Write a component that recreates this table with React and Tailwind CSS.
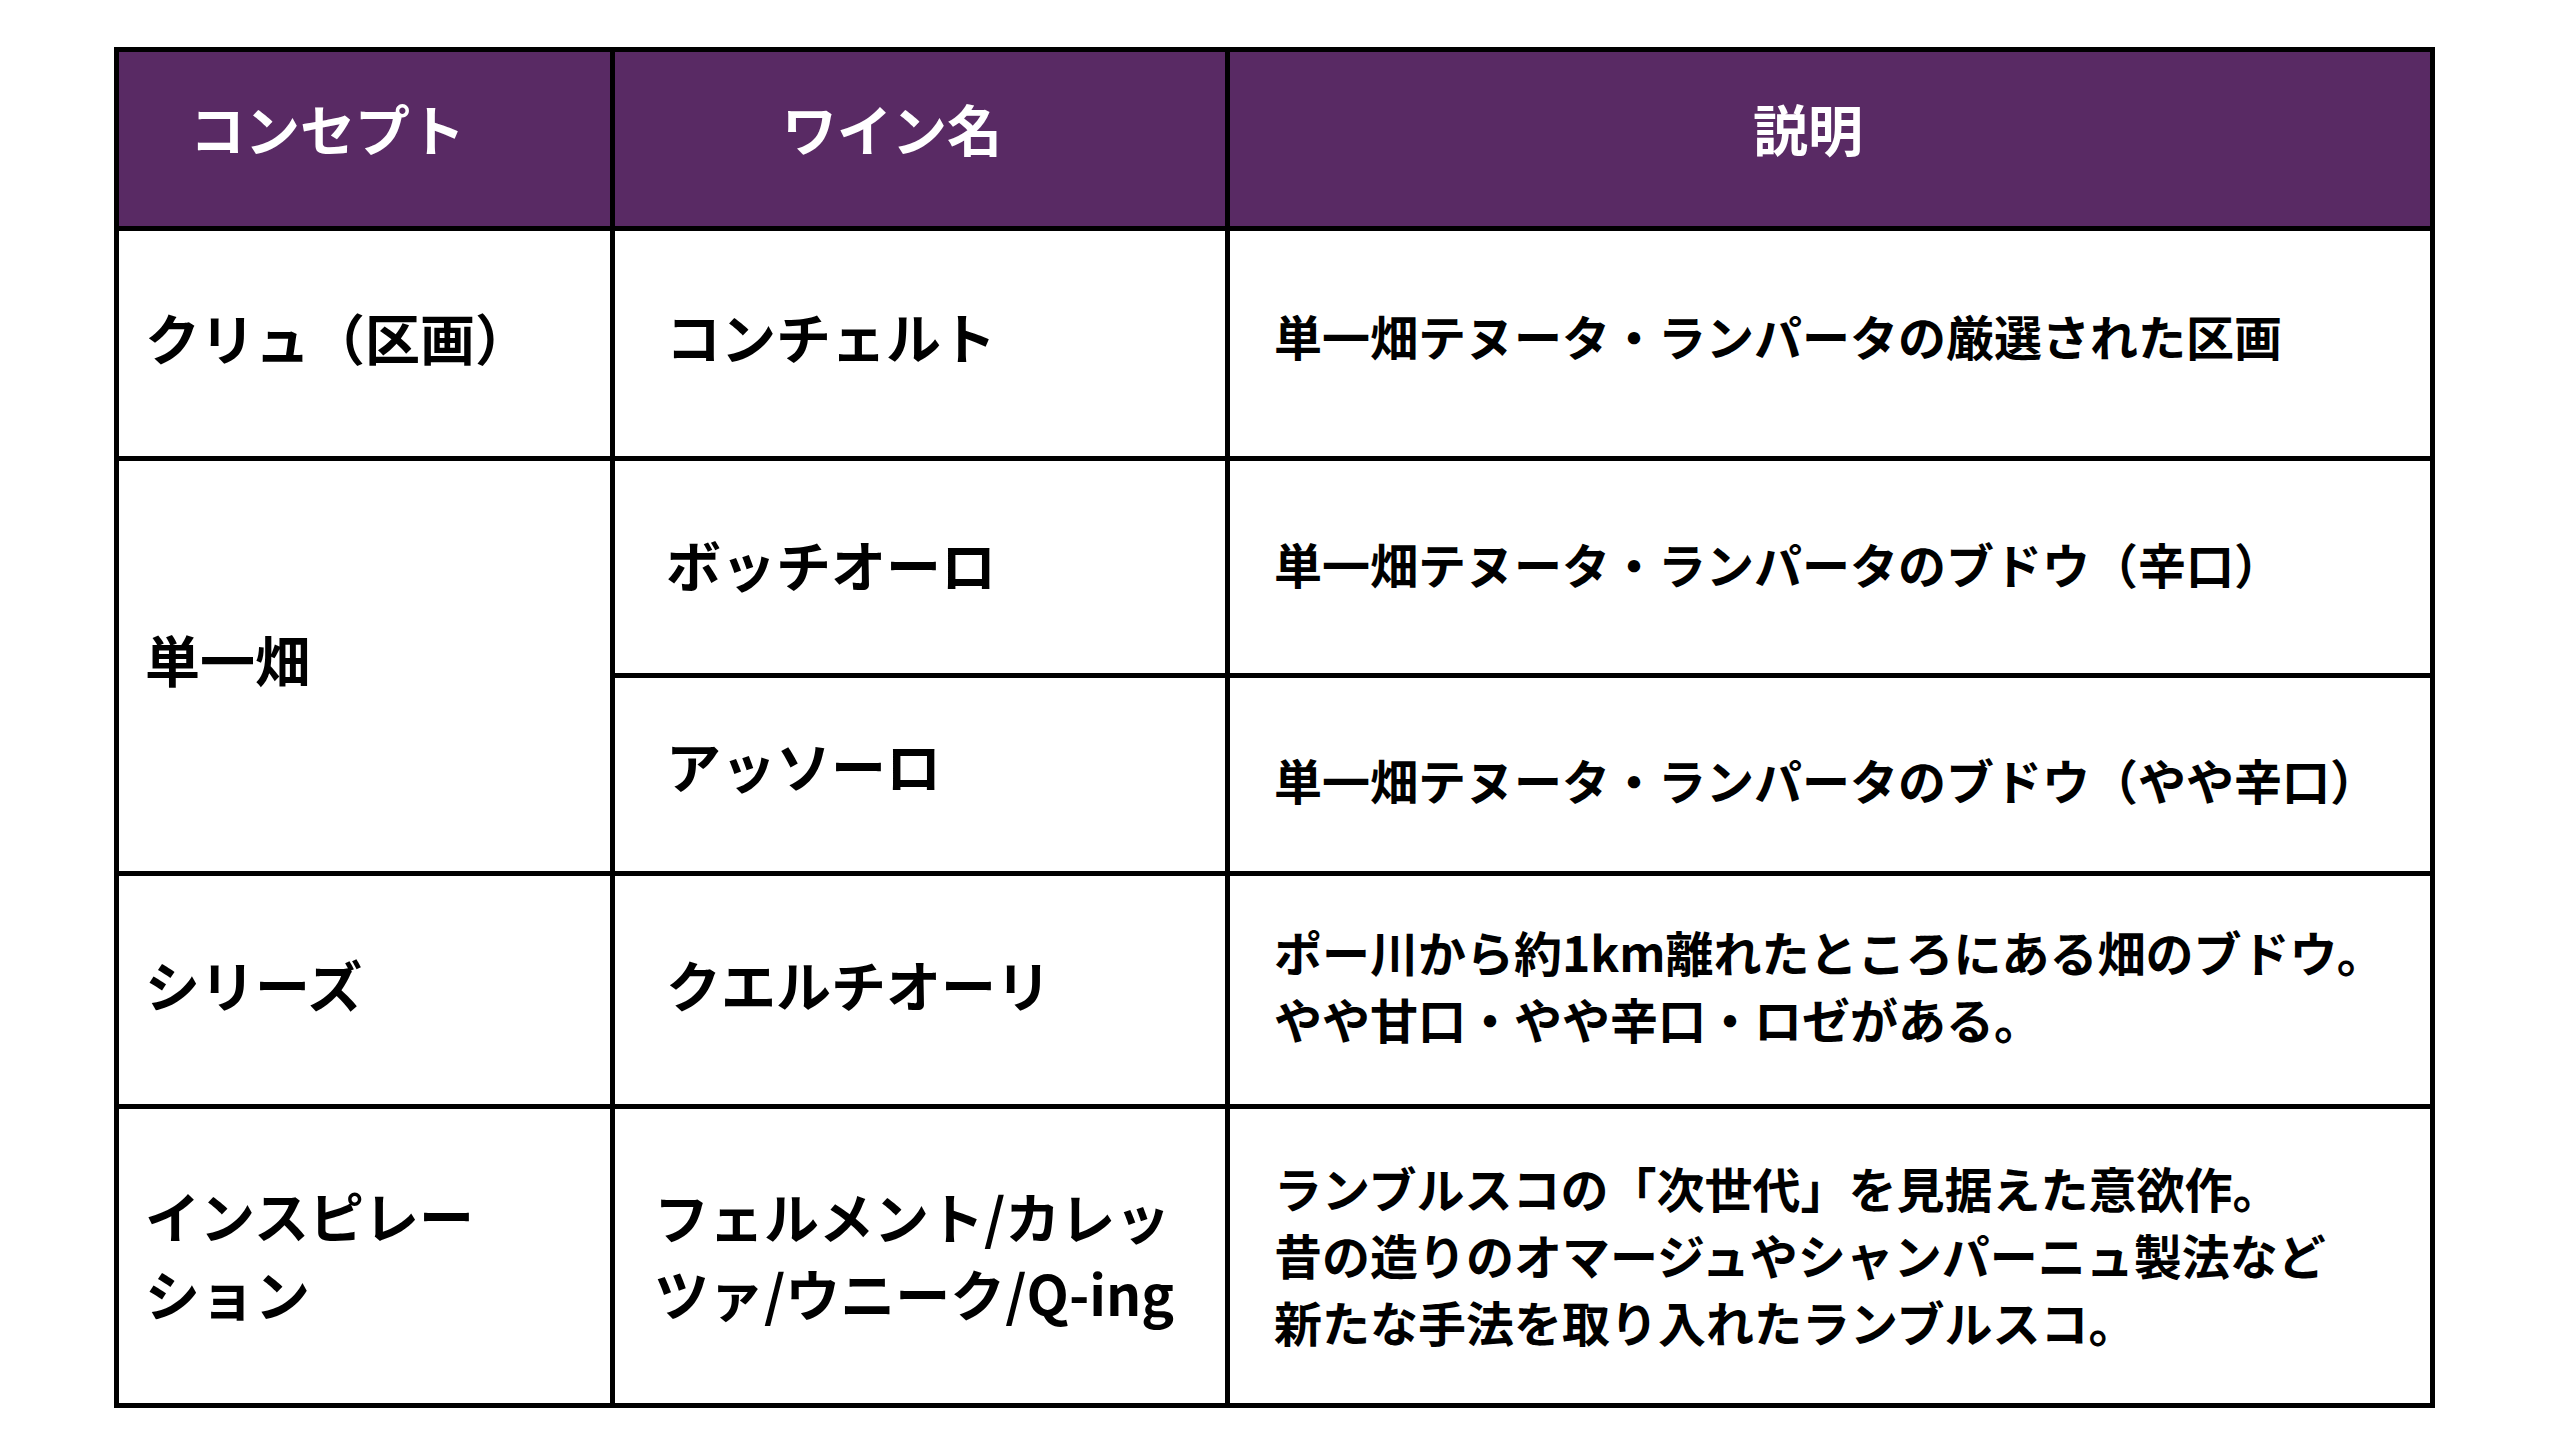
const cell = "border-r-[5px] border-b-[5px] border-black align-middle";
const nameCell = `${cell} text-[55px] leading-[77px] pl-[51px]`;
const descCell = `${cell} text-[48px] leading-[67px] pl-[44px]`;
const conceptCell = `${cell} text-[55px] leading-[78px] pl-[26px]`;
const headCell = `${cell} bg-[#592a64] text-white text-[55px] font-bold text-center pb-[24px]`;

export default function App() {
  return (
    <div className="min-h-screen bg-white pt-[47px] pl-[114px] font-['Noto_Sans_CJK_JP','Noto_Sans',sans-serif] font-bold text-black">
      <table className="w-[2321px] table-fixed border-separate border-spacing-0 border-t-[5px] border-l-[5px] border-black">
        <colgroup>
          <col className="w-[496px]" />
          <col className="w-[615px]" />
          <col className="w-[1205px]" />
        </colgroup>
        <thead>
          <tr className="h-[179px]">
            <th className={`${headCell} pr-[74px]`}>コンセプト</th>
            <th className={`${headCell} pr-[56px]`}>ワイン名</th>
            <th className={`${headCell} pr-[44px]`}>説明</th>
          </tr>
        </thead>
        <tbody>
          {/* クリュ */}
          <tr className="h-[230px]">
            <td className={`${conceptCell} pb-[16px]`}>クリュ（区画）</td>
            <td className={`${nameCell} pb-[16px]`}>コンチェルト</td>
            <td className={`${descCell} pb-[16px]`}>単一畑テヌータ・ランパータの厳選された区画</td>
          </tr>
          {/* 単一畑 */}
          <tr className="h-[217px]">
            <td rowSpan={2} className={`${conceptCell} pb-[16px]`}>単一畑</td>
            <td className={`${nameCell} pb-[8px]`}>ボッチオーロ</td>
            <td className={`${descCell} pb-[8px]`}>単一畑テヌータ・ランパータのブドウ（辛口）</td>
          </tr>
          <tr className="h-[198px]">
            <td className={`${nameCell} pb-[20px]`}>アッソーロ</td>
            <td className={`${descCell} pt-[10px]`}>単一畑テヌータ・ランパータのブドウ（やや辛口）</td>
          </tr>
          {/* シリーズ */}
          <tr className="h-[233px]">
            <td className={`${conceptCell} pb-[14px]`}>シリーズ</td>
            <td className={`${nameCell} pb-[14px]`}>クエルチオーリ</td>
            <td className={`${descCell} pb-[10px]`}>
              ポー川から約1km離れたところにある畑のブドウ。
              <br />
              やや甘口・やや辛口・ロゼがある。
            </td>
          </tr>
          {/* インスピレーション */}
          <tr className="h-[299px]">
            <td className={`${conceptCell} pb-[6px]`}>
              インスピレー
              <br />
              ション
            </td>
            <td className={`${cell} text-[55px] leading-[77px] pl-[39px] pb-[4px]`}>
              フェルメント/カレッ
              <br />
              ツァ/ウニーク/Q-ing
            </td>
            <td className={`${descCell} pb-[4px]`}>
              ランブルスコの「次世代」を見据えた意欲作。
              <br />
              昔の造りのオマージュやシャンパーニュ製法など
              <br />
              新たな手法を取り入れたランブルスコ。
            </td>
          </tr>
        </tbody>
      </table>
    </div>
  );
}
